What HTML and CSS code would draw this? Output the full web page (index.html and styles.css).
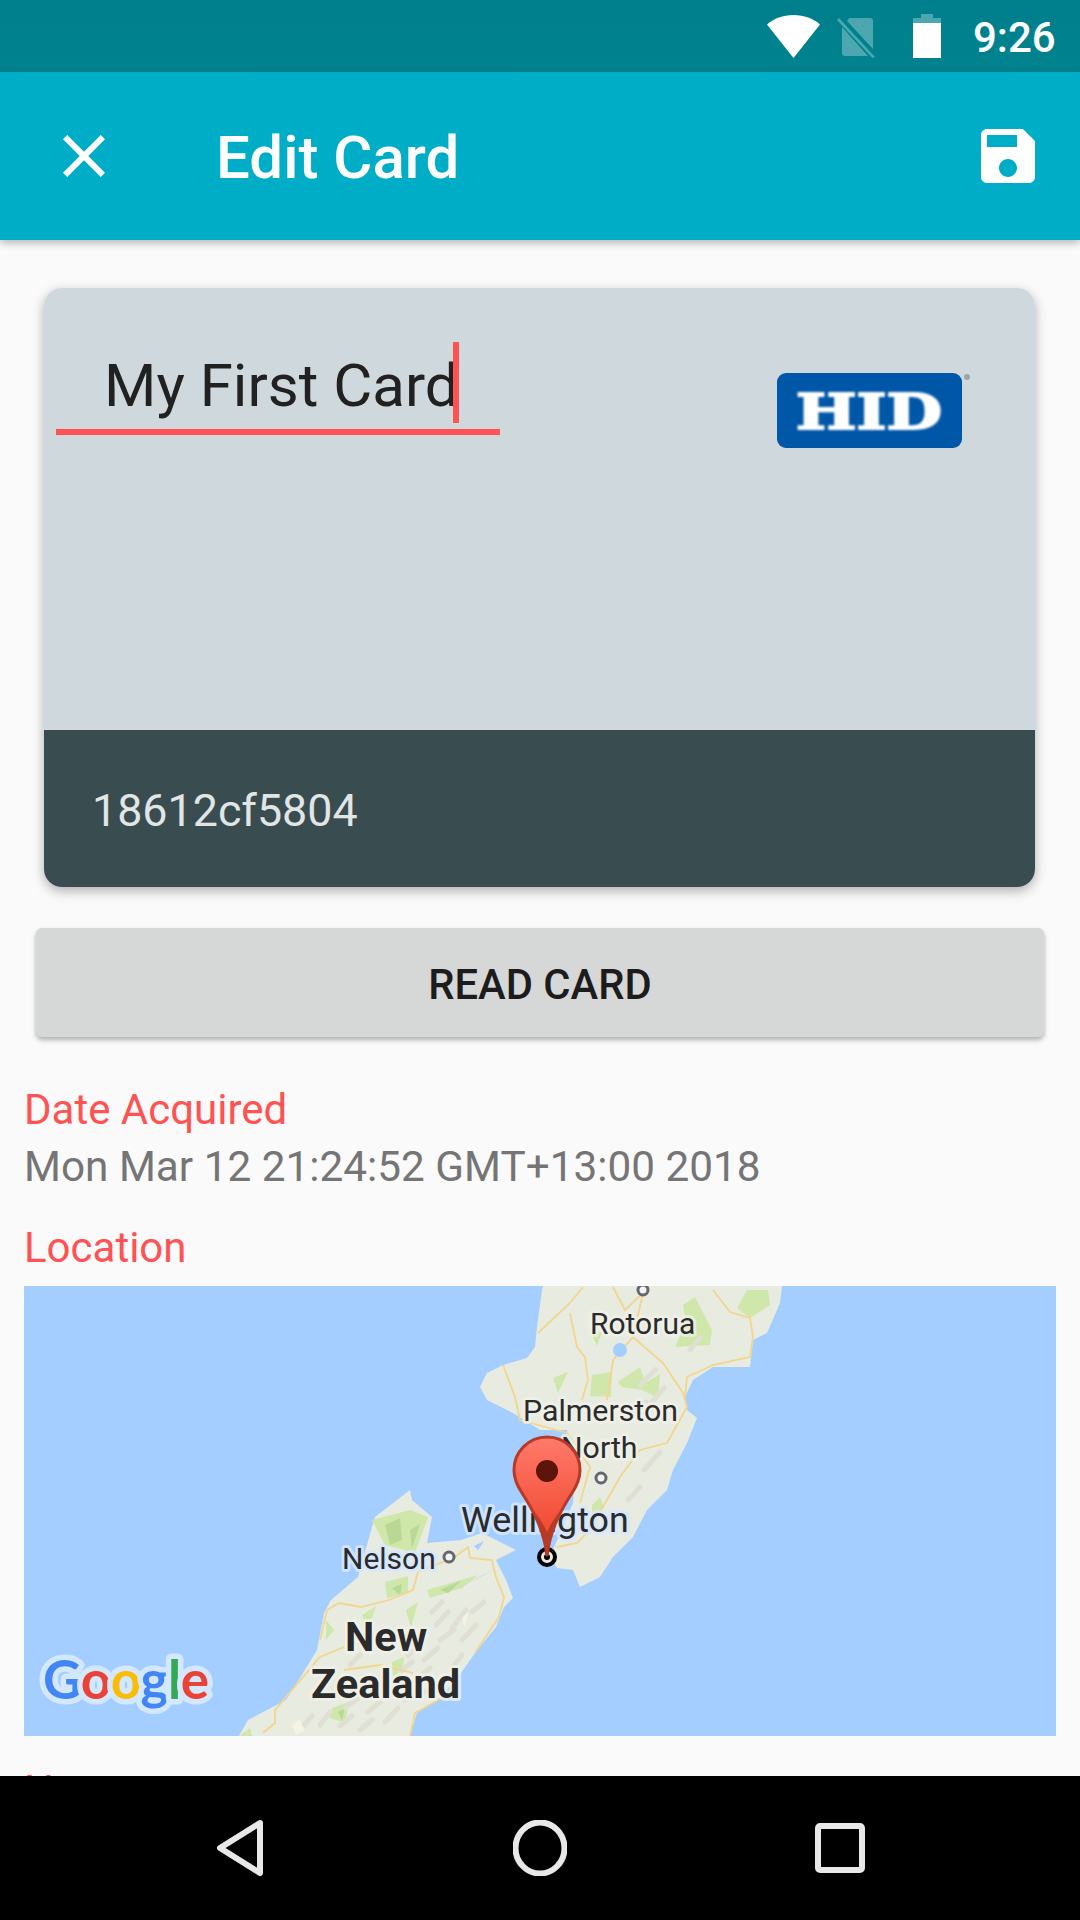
FILE: index.html
```html
<!DOCTYPE html>
<html lang="en">
<head>
<meta charset="utf-8">
<title>Edit Card</title>
<link rel="stylesheet" href="styles.css">
</head>
<body>
<div class="screen">
  <header class="status">
    <svg class="ic-wifi" viewBox="0 0 53 43"><path d="M0 9.5C7 3.5 16 0 26.500 0S46 3.500 53 9.500L26.500 43z"/></svg>
    <svg class="ic-sim" viewBox="0 0 40 41"><path class="dim" d="M12 1h21a3 3 0 0 1 3 3v28L10 4zM5 10l26 29H8a3 3 0 0 1-3-3zM2 1l36 39-2.500 1L0 3z"/></svg>
    <svg class="ic-batt" viewBox="0 0 28 44"><path class="dim" d="M8 0h12v4h8v5H0V4h8z"/><path d="M0 9h28v35H0z"/></svg>
    <span class="clock">9:26</span>
  </header>

  <div class="toolbar">
    <svg class="ic-72" viewBox="0 0 24 24"><path d="M19 6.410 17.590 5 12 10.590 6.410 5 5 6.410 10.590 12 5 17.590 6.410 19 12 13.410 17.590 19 19 17.590 13.410 12z"/></svg>
    <h1 class="title">Edit Card</h1>
    <svg class="ic-72" viewBox="0 0 24 24"><path d="M17 3H5c-1.110 0-2 .9-2 2v14c0 1.100.89 2 2 2h14c1.100 0 2-.9 2-2V7l-4-4zm-5 16c-1.660 0-3-1.340-3-3s1.340-3 3-3 3 1.340 3 3-1.340 3-3 3zm3-10H5V5h10v4z"/></svg>
  </div>

  <main class="content">
    <section class="card">
      <div class="card-top">
        <div class="name-input">
          <span class="name-text">My First Card</span><span class="caret"></span>
        </div>
        <svg class="hid" viewBox="0 0 196 82">
          <rect class="hid-box" x="1" y="5" width="185" height="75" rx="9"/>
          <text class="hid-text" x="20" y="61" textLength="146" lengthAdjust="spacingAndGlyphs">HID</text>
          <circle class="hid-reg" cx="191" cy="9" r="3"/>
        </svg>
      </div>
      <div class="card-bottom">18612cf5804</div>
    </section>

    <button class="read-btn" type="button">READ CARD</button>

    <div class="field">
      <div class="label">Date Acquired</div>
      <div class="value">Mon Mar 12 21:24:52 GMT+13:00 2018</div>
    </div>

    <div class="label label-loc">Location</div>

    <svg class="map" viewBox="24 1286 1032 450">
      <defs>
        <linearGradient id="pinfill" x1="0" y1="0" x2="0" y2="1">
          <stop offset="0" stop-color="#ff7a6a"/>
          <stop offset="1" stop-color="#ee3f24"/>
        </linearGradient>
      </defs>
      <rect class="sea" x="24" y="1286" width="1032" height="450"/>

      <path class="land" d="M543 1286H782L780 1303 767 1333 753 1340 750 1367 713 1367 693 1380 685 1397 687 1410 697 1418 687 1443 673 1470 667 1490 647 1510 633 1537 613 1557 600 1577 580 1587 573 1570 557 1568 550 1557 573 1503 575 1470 567 1430 540 1430 513 1413 487 1400 480 1387 487 1373 503 1365 527 1358 535 1347 537 1327 542 1290Z"/>
      <path class="land" d="M239 1736 248 1720 286 1700 303 1673 317 1650 324 1613 331 1600 358 1577 372 1527 375 1517 410 1490 412 1500 432 1517 427 1543 461 1540 482 1533 516 1550 496 1560 506 1580 513 1598 504 1607 496 1627 475 1653 461 1673 441 1697 417 1713 410 1736Z"/>

      <path class="green" d="M683 1305 695 1297 712 1330 710 1345 675 1347 686 1322ZM747 1290 768 1290 770 1305 750 1318 737 1308ZM592 1375 612 1372 611 1397 590 1396ZM553 1378 568 1372 558 1393ZM618 1382 640 1367 645 1383 660 1374 658 1398 642 1390 622 1387ZM592 1335 602 1332 597 1346ZM592 1505 600 1497 604 1508 592 1517Z"/>
      <path class="green" d="M372 1520 410 1510 428 1517 415 1553 385 1545ZM427 1590 478 1575 462 1588 430 1598ZM385 1582 408 1576 408 1593 387 1598ZM326 1620 334 1630 326 1640ZM362 1615 376 1606 368 1632ZM406 1610 418 1602 411 1628ZM332 1708 349 1702 345 1723 330 1718ZM392 1662 404 1657 401 1678 393 1676ZM239 1736 250 1728 252 1736Z"/>
      <path class="green-d" d="M385 1525 400 1518 402 1540 390 1545ZM410 1530 420 1524 412 1548ZM440 1590 462 1580 448 1593ZM392 1588 402 1584 400 1595ZM338 1712 345 1708 342 1720Z"/>

      <path class="streaks" d="M436 1625 448 1612M452 1628 466 1610M472 1612 484 1602M440 1640 454 1630M462 1640 476 1625M408 1655 420 1645M424 1660 438 1648M400 1672 412 1662M418 1678 430 1668M352 1690 366 1680M372 1692 384 1682M345 1708 358 1698M368 1712 380 1702M340 1726 352 1716M360 1730 372 1720M385 1722 398 1708M405 1700 418 1690M425 1692 436 1684M300 1730 312 1716M320 1725 330 1712M350 1665 360 1655M432 1612 442 1602M640 1385 655 1370M652 1402 664 1388M632 1415 646 1402M644 1470 660 1452M628 1500 640 1487M690 1350 700 1338M462 1655 452 1668"/>
      <path class="snow" d="M292 1726 299 1719 305 1730 296 1735ZM462 1618 468 1612 465 1628Z"/>

      <path class="road" d="M583 1287 570 1303 538 1333M570 1313 577 1347 585 1357 588 1380 582 1400M613 1287 625 1310 643 1293 633 1337 613 1360 607 1400M633 1337 663 1363 683 1393 687 1407 667 1443 640 1450 620 1477 607 1500 587 1533 577 1543 557 1547M503 1365 515 1397 520 1420 567 1433 590 1467 580 1503M713 1290 730 1312 750 1318 753 1337 750 1357 713 1365 687 1377 685 1397"/>
      <path class="road" d="M263 1733 275 1723 275 1710 303 1677 320 1657 344 1647M320 1640 327 1610 339 1603 361 1607 389 1600 413 1590 418 1572 455 1557 468 1547 470 1558 492 1560 496 1577 504 1597 499 1617 475 1653M410 1736 415 1713 461 1687M344 1670 380 1665 413 1673"/>

      <ellipse class="lake" cx="620" cy="1350" rx="7" ry="7"/>
      <path class="channel" d="M452 1590 498 1568 478 1578ZM474 1546 484 1541 478 1550Z"/>

      <circle class="dot" cx="643" cy="1290" r="5"/>
      <circle class="dot" cx="601" cy="1478" r="5"/>
      <circle class="dot" cx="449" cy="1557" r="5"/>

      <text class="place place-land" x="590" y="1334">Rotorua</text>
      <text class="place place-land place-p" x="523" y="1421">Palmerston</text>
      <text class="place place-land place-p" x="561" y="1458">North</text>
      <text class="place place-sea place-w" x="461" y="1532">Wellington</text>
      <text class="place place-sea" x="342" y="1569">Nelson</text>
      <text class="country" x="345" y="1651">New</text>
      <text class="country" x="311" y="1698">Zealand</text>

      <text class="google" x="43" y="1699" textLength="166"><tspan class="g-b">G</tspan><tspan class="g-r">o</tspan><tspan class="g-y">o</tspan><tspan class="g-b">g</tspan><tspan class="g-g">l</tspan><tspan class="g-r">e</tspan></text>

      <circle class="target" cx="547" cy="1557" r="8"/>
      <circle class="target-c" cx="547" cy="1557" r="3"/>
      <path class="pin" d="M547 1556C544 1530 533 1510 522 1493 516 1484 514 1478 514 1470A33 33 0 0 1 580 1470C580 1478 578 1484 572 1493 561 1510 550 1530 547 1556Z"/>
      <path class="pin-tail" d="M547 1556C545 1536 541 1524 535 1512 541 1520 545 1528 547 1532 549 1528 553 1520 559 1512 553 1524 549 1536 547 1556Z"/>
      <circle class="pin-dot" cx="547" cy="1471" r="11"/>
    </svg>

    <div class="label label-name">Name</div>
  </main>

  <nav class="navbar">
    <svg class="nav-back" viewBox="0 0 46 56"><path d="M43 3 3 28 43 53Z"/></svg>
    <svg class="nav-home" viewBox="0 0 54 56"><ellipse cx="27" cy="28" rx="24.500" ry="25.500"/></svg>
    <svg class="nav-recent" viewBox="0 0 50 50"><rect x="3" y="3" width="44" height="44" rx="2"/></svg>
  </nav>
</div>
</body>
</html>
```

FILE: styles.css
```css
* { box-sizing: border-box; }
html, body { margin: 0; padding: 0; }
body { font-family: Roboto, "Liberation Sans", sans-serif; background: #fafafa; }
.screen { width: 1080px; height: 1920px; display: flex; flex-direction: column; overflow: hidden; }

.status {
  height: 72px; flex: none;
  display: flex; align-items: center; justify-content: flex-end;
  background: linear-gradient(#007f8c, #00838f);
  padding-right: 27px;
}
.status svg { fill: #fff; display: block; }
.status .dim { opacity: .3; }
.ic-wifi { width: 53px; height: 43px; margin-right: 17px; }
.ic-sim { width: 40px; height: 41px; margin-right: 36px; margin-top: 2px; }
.ic-batt { width: 28px; height: 44px; margin-right: 32px; }
.clock { color: #fff; font-size: 42px; font-weight: 500; line-height: 72px; width: 80px; white-space: nowrap; margin-top: 4px; }

.toolbar {
  height: 168px; flex: none;
  display: flex; align-items: center;
  padding: 0 36px 0 48px;
  background: #00adc6;
  box-shadow: 0 3px 8px rgba(0, 0, 0, .28);
  position: relative;
  z-index: 1;
}
.ic-72 { width: 72px; height: 72px; fill: #fff; display: block; flex: none; }
.title { margin: 4px 0 0 96px; flex: 1; color: #fff; font-size: 60px; font-weight: 500; line-height: 72px; }

.content { flex: 1; min-height: 0; overflow: hidden; display: flex; flex-direction: column; padding-top: 48px; }

.card {
  margin: 0 45px 0 44px; height: 599px; flex: none;
  border-radius: 18px; overflow: hidden;
  display: flex; flex-direction: column;
  box-shadow: 0 4px 12px rgba(0, 0, 0, .3);
}
.card-top {
  height: 442px; background: #cfd8dc;
  display: flex; align-items: flex-start; justify-content: space-between;
  padding: 54px 63px 0 12px;
}
.name-input {
  width: 444px; height: 93px;
  display: flex; align-items: flex-start;
  padding-left: 48px;
  border-bottom: 6px solid #ff5252;
}
.name-text { color: #212121; font-size: 60px; line-height: 87px; white-space: nowrap; }
.caret { width: 6px; height: 81px; background: #ff5252; margin-left: -6px; flex: none; }
.hid { width: 196px; height: 82px; margin-top: 26px; display: block; flex: none; }
.hid-box { fill: #0057a8; filter: blur(.6px); }
.hid-text { fill: #fff; stroke: #fff; stroke-width: 2px; font-family: "DejaVu Serif", serif; font-weight: 700; font-size: 49px; filter: blur(.8px); }
.hid-reg { fill: #9aa6ad; }
.card-bottom {
  flex: 1; background: #394c50; color: #e2e5e5;
  font-size: 44.800px; line-height: 56px;
  padding: 53px 0 0 48px;
}

.read-btn {
  margin: 41px 36px 0; height: 109px; flex: none;
  padding: 4px 0 0;
  border: 0; border-radius: 6px; background: #d6d7d7;
  box-shadow: 0 3px 5px rgba(0, 0, 0, .3);
  color: #1c1c1c; font-family: inherit; font-size: 41.700px; font-weight: 500;
}

.field { margin-top: 45px; padding: 0 24px; }
.label { color: #ff5252; font-size: 42px; line-height: 56px; padding: 0 24px; flex: none; }
.field .label { padding: 0; }
.value { color: #757575; font-size: 42.300px; line-height: 56px; margin-top: 1px; white-space: nowrap; }
.label-loc { margin-top: 25px; }
.map { display: block; flex: none; width: 1032px; height: 450px; margin: 10px 0 0 24px; }
.label-name { margin-top: 27px; }

.sea { fill: #a4ceff; }
.land { fill: #e8ebe0; }
.green { fill: #cfe7ab; }
.green-d { fill: #b9d896; }
.streaks { fill: none; stroke: #dfdfd3; stroke-width: 5; stroke-linecap: round; }
.snow { fill: #f7f3e4; }
.road { fill: none; stroke: #f2d58e; stroke-width: 1.800; }
.lake { fill: #a4ceff; }
.channel { fill: #a4ceff; }
.dot { fill: #f3f3f3; stroke: #66666e; stroke-width: 3; }
.place, .country { fill: #2b2b2b; font-family: Roboto, sans-serif; paint-order: stroke; stroke-linejoin: round; }
.place { font-size: 30px; stroke-width: 6px; }
.place-p { font-size: 30.300px; }
.place-w { font-size: 35.800px; }
.place-land { stroke: rgba(240, 242, 234, .75); }
.place-sea { stroke: rgba(214, 231, 255, .85); }
.country { font-size: 41.500px; font-weight: 700; stroke: rgba(240, 242, 234, .8); stroke-width: 6px; }
.google {
  font-family: Lato, Roboto, sans-serif; font-size: 53px; font-weight: 700;
  paint-order: stroke; stroke: rgba(214, 232, 255, .95); stroke-width: 11px; stroke-linejoin: round;
}
.g-b { fill: #4285f4; }
.g-r { fill: #ea4335; }
.g-y { fill: #fbbc05; }
.g-g { fill: #34a853; }
.target { fill: #e8e8e8; stroke: #000; stroke-width: 4; }
.target-c { fill: #000; }
.pin { fill: url(#pinfill); stroke: #b63a28; stroke-width: 3; }
.pin-tail { fill: #b63a28; }
.pin-dot { fill: #5c140b; }

.navbar {
  height: 144px; flex: none; background: #000;
  padding: 0 90px;
  display: grid; grid-template-columns: repeat(3, 1fr); align-items: center; justify-items: center;
}
.navbar svg { display: block; fill: none; stroke: #e8e8e8; stroke-width: 6; stroke-linejoin: round; }
.nav-back { width: 46px; height: 56px; }
.nav-home { width: 54px; height: 56px; }
.nav-recent { width: 50px; height: 50px; }
```
